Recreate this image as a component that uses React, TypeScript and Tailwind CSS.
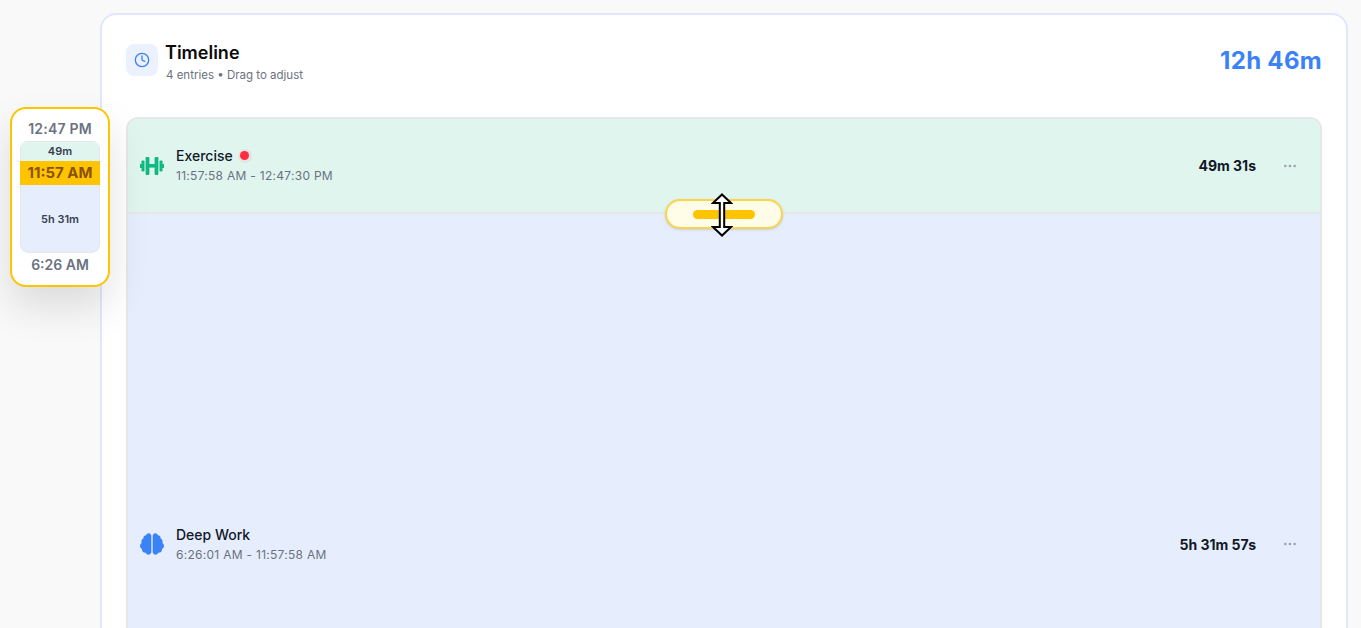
import { Clock, Ellipsis } from 'lucide-react';
import { FaBrain } from 'react-icons/fa';
import { ReactNode } from 'react';

type EntryProps = {
  icon: ReactNode;
  name: string;
  range: string;
  duration: string;
  live?: boolean;
  className: string;
};

const DumbbellIcon = () => (
  <svg width="24" height="18" viewBox="0 0 24 18" fill="#10b981">
    <rect x="0" y="7" width="2" height="4" />
    <rect x="1.5" y="3.5" width="3" height="11" rx="1" />
    <rect x="5.6" y="0" width="3.8" height="18" rx="1.2" />
    <rect x="9" y="7" width="6" height="3.6" />
    <rect x="14.6" y="0" width="3.8" height="18" rx="1.2" />
    <rect x="19.5" y="3.5" width="3" height="11" rx="1" />
    <rect x="22" y="7" width="2" height="4" />
  </svg>
);

const Entry = ({ icon, name, range, duration, live, className }: EntryProps) => (
  <div className={`flex items-center pl-3 shrink-0 ${className}`}>
    <div className="w-6 flex justify-center">{icon}</div>
    <div className="ml-3 flex-1">
      <div className="flex items-center h-[19px] mb-[2px] text-[14px] font-medium text-[#111827]">
        {name}
        {live && (
          <span className="ml-[5px] w-3.5 h-3.5 rounded-full bg-[#e3e3e3] flex items-center justify-center">
            <span className="w-[9px] h-[9px] rounded-full bg-[#ff2d3f]"></span>
          </span>
        )}
      </div>
      <div className="text-[12px] leading-[18px] tracking-[0.28px] text-[#6b7280]">{range}</div>
    </div>
    <div className="text-[14px] font-bold text-[#111827]">{duration}</div>
    <div className="w-16 flex justify-center pl-1 text-[#9ca3af]">
      <Ellipsis size={16} />
    </div>
  </div>
);

export default function App() {
  return (
    <div className="relative h-screen overflow-hidden bg-[#f9f9f9] font-['Inter',_sans-serif]">
      <div className="ml-[100px] mr-[13px] mt-[13px] h-[800px] rounded-2xl border-2 border-[#e0e7fd] bg-white px-6 pt-6">
        <div className="flex justify-between items-start">
          <div className="flex gap-2 items-start">
            <div className="w-8 h-8 mt-[5px] rounded-lg bg-[#ebf1ff] flex items-center justify-center text-[#3b82f6]">
              <Clock size={16} />
            </div>
            <div>
              <div className="text-[18px] leading-[28px] font-semibold text-[#0a0a0a] -ml-px">Timeline</div>
              <div className="text-[11.5px] leading-[16px] text-[#6b7280]">4 entries • Drag to adjust</div>
            </div>
          </div>
          <div className="mt-[6px] text-[24px] leading-[32px] tracking-[0.3px] font-bold text-[#3b82f6]">12h 46m</div>
        </div>
        <div className="mt-[34px] h-[800px] rounded-xl border-2 border-[#e5e7eb] overflow-hidden flex flex-col">
          <Entry
            className="h-[95px] bg-[#e0f5ee] border-b-2 border-[#e5e7eb]"
            icon={<DumbbellIcon />}
            name="Exercise"
            live
            range="11:57:58 AM - 12:47:30 PM"
            duration="49m 31s"
          />
          <Entry
            className="h-[660px] bg-[#e6edfd]"
            icon={<FaBrain size={24} className="text-[#3b82f6]" />}
            name="Deep Work"
            range="6:26:01 AM - 11:57:58 AM"
            duration="5h 31m 57s"
          />
        </div>
      </div>

      {/* drag preview */}
      <div className="absolute left-[10px] top-[107px] w-[100px] h-[180px] rounded-2xl border-2 border-[#ffc400] bg-white shadow-[0_20px_40px_rgba(0,0,0,0.12)] px-2 flex flex-col items-center">
        <div className="mt-[10px] text-[14px] leading-[20px] tracking-[0.2px] font-semibold text-[#6b7280]">12:47 PM</div>
        <div className="mt-[2px] w-20 h-[112px] rounded-lg overflow-hidden flex flex-col text-center">
          <div className="h-5 bg-[#e0f5ee] border-x border-t border-[#e5e7eb] text-[11px] leading-[19px] font-semibold text-[#374151]">49m</div>
          <div className="h-6 bg-[#ffc400] text-[15px] leading-6 font-bold text-[#8a5200]">11:57 AM</div>
          <div className="flex-1 pt-0.5 rounded-b-lg bg-[#e6edfd] border-x border-b border-[#e5e7eb] flex items-center justify-center text-[11px] font-semibold text-[#374151]">5h 31m</div>
        </div>
        <div className="mt-[2px] text-[14px] leading-[20px] font-semibold text-[#6b7280]">6:26 AM</div>
      </div>

      {/* drag handle */}
      <div className="absolute left-[665px] top-[199px] w-[118px] h-[30px] rounded-full border-2 border-[#fcd34d] bg-[#fffce8] shadow-sm flex items-center justify-center">
        <div className="w-[62px] h-[9px] rounded-full bg-[#ffc400]"></div>
      </div>
      <svg className="absolute left-[711px] top-[193px]" width="22" height="44" viewBox="0 0 22 44">
        <path
          d="M11 1.5L20 10H13.2V34H20L11 42.5L2 34H8.8V10H2Z"
          fill="#fff"
          stroke="#000"
          strokeWidth="2"
        />
      </svg>
    </div>
  );
}
